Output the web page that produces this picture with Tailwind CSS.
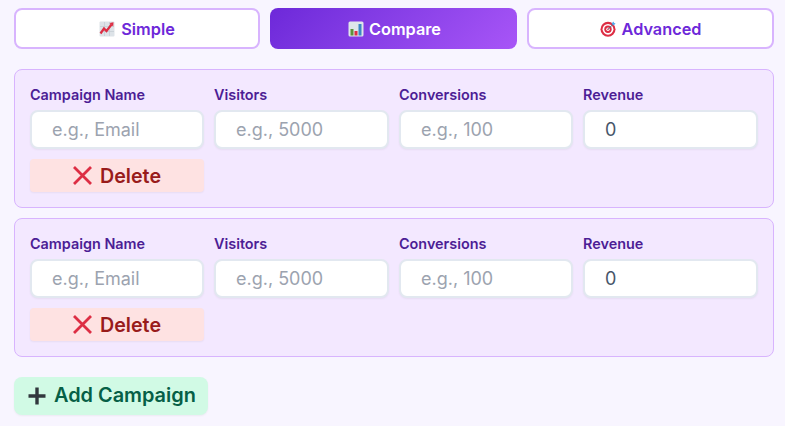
<!DOCTYPE html>
<html>
  <head>
    <meta charset="UTF-8" />
    <title>Campaign compare</title>
    <script src="https://cdn.jsdelivr.net/npm/@tailwindcss/browser@4"></script>
  </head>
  <body class="bg-[#f8f5ff] font-['Inter',sans-serif] overflow-hidden">
    <div class="pl-[14px] pr-[11px] pt-2 pb-[11px]">
      <!-- Tabs -->
      <div class="grid grid-cols-[246px_247px_247px] gap-[10px] mb-5">
        <button class="h-[41px] pt-px flex items-center justify-center gap-[6px] bg-white border-2 border-[#d8b4fe] rounded-lg text-[16.3px] font-semibold text-[#6d28d9]">
          <svg class="w-4 h-4" viewBox="0 0 16 16"><rect x="0.5" y="0.5" width="15" height="15" rx="1" fill="#dde3e8"/><path d="M5.5 1v14M10.5 1v14M1 5.5h14M1 10.5h14" stroke="#c3ccd3" stroke-width="0.7"/><path d="M1.5 12.5l3.5-5 2.5 2.5 5-6.5" fill="none" stroke="#dd2e44" stroke-width="2.2"/><path d="M10.5 2l4-.8-.3 4.3z" fill="#dd2e44"/></svg>
          <span>Simple</span>
        </button>
        <button class="h-[41px] pt-px pl-[2px] flex items-center justify-center gap-[5px] bg-linear-135 from-[#6d28d9] to-[#a855f7] rounded-lg text-[16.3px] font-semibold text-white">
          <svg class="w-4 h-4" viewBox="0 0 16 16"><rect x="0.5" y="0.5" width="15" height="15" rx="1.5" fill="#dfe6ea"/><rect x="2.5" y="8" width="3" height="6.5" fill="#5c913b"/><rect x="6.5" y="10" width="3" height="4.5" fill="#dd2e44"/><rect x="10.5" y="3" width="3" height="11.5" fill="#3b88c3"/></svg>
          <span>Compare</span>
        </button>
        <button class="h-[41px] pt-px flex items-center justify-center gap-[6px] bg-white border-2 border-[#d8b4fe] rounded-lg text-[16.3px] font-semibold text-[#6d28d9]">
          <svg class="w-4 h-4" viewBox="0 0 16 16"><circle cx="8" cy="8.3" r="7.5" fill="#dd2e44"/><circle cx="8" cy="8.3" r="5.4" fill="#fff"/><circle cx="8" cy="8.3" r="3.7" fill="#dd2e44"/><circle cx="8" cy="8.3" r="1.7" fill="#fff"/><circle cx="8" cy="8.3" r="0.8" fill="#dd2e44"/><path d="M8 8.3l6-6" stroke="#55708a" stroke-width="1"/><path d="M11.5 2.5l2-2 .6 1.4 1.5.5-2 2z" fill="#55acee"/></svg>
          <span>Advanced</span>
        </button>
      </div>

      <!-- Campaign rows -->
      <div class="flex flex-col gap-[10px]">
        <div class="h-[139px] bg-[#f3e8ff] border border-[#d8b4fe] rounded-lg px-[15px] pt-[14px]">
          <div class="grid grid-cols-[174px_175px_174px_175px] gap-x-[10px]">
            <div>
              <label class="block h-[26px] text-[14.4px] font-semibold leading-[22px] text-[#4c1d95]">Campaign Name</label>
              <input type="text" placeholder="e.g., Email" class="block w-full h-[39px] px-5 bg-white border-2 border-[#e2e8f0] rounded-lg shadow-xs text-lg text-[#475569] placeholder:text-[#9ca3af]" />
            </div>
            <div>
              <label class="block h-[26px] text-[14.4px] font-semibold leading-[22px] text-[#4c1d95]">Visitors</label>
              <input type="text" placeholder="e.g., 5000" class="block w-full h-[39px] px-5 bg-white border-2 border-[#e2e8f0] rounded-lg shadow-xs text-lg text-[#475569] placeholder:text-[#9ca3af]" />
            </div>
            <div>
              <label class="block h-[26px] text-[14.4px] font-semibold leading-[22px] text-[#4c1d95]">Conversions</label>
              <input type="text" placeholder="e.g., 100" class="block w-full h-[39px] px-5 bg-white border-2 border-[#e2e8f0] rounded-lg shadow-xs text-lg text-[#475569] placeholder:text-[#9ca3af]" />
            </div>
            <div>
              <label class="block h-[26px] text-[14.4px] font-semibold leading-[22px] text-[#4c1d95]">Revenue</label>
              <input type="text" value="0" class="block w-full h-[39px] px-5 bg-white border-2 border-[#e2e8f0] rounded-lg shadow-xs text-lg text-[#475569]" />
            </div>
            <button class="mt-[10px] h-[33px] flex items-center justify-center gap-[8px] bg-[#fee2e2] rounded shadow-xs text-[19.7px] font-semibold text-[#991b1b]">
              <svg class="w-[19px] h-[19px]" viewBox="0 0 19 19"><path d="M1 1l17 17M18 1L1 18" stroke="#dd2e44" stroke-width="2.8"/></svg>
              <span class="pt-[2px]">Delete</span>
            </button>
          </div>
        </div>

        <div class="h-[139px] bg-[#f3e8ff] border border-[#d8b4fe] rounded-lg px-[15px] pt-[14px]">
          <div class="grid grid-cols-[174px_175px_174px_175px] gap-x-[10px]">
            <div>
              <label class="block h-[26px] text-[14.4px] font-semibold leading-[22px] text-[#4c1d95]">Campaign Name</label>
              <input type="text" placeholder="e.g., Email" class="block w-full h-[39px] px-5 bg-white border-2 border-[#e2e8f0] rounded-lg shadow-xs text-lg text-[#475569] placeholder:text-[#9ca3af]" />
            </div>
            <div>
              <label class="block h-[26px] text-[14.4px] font-semibold leading-[22px] text-[#4c1d95]">Visitors</label>
              <input type="text" placeholder="e.g., 5000" class="block w-full h-[39px] px-5 bg-white border-2 border-[#e2e8f0] rounded-lg shadow-xs text-lg text-[#475569] placeholder:text-[#9ca3af]" />
            </div>
            <div>
              <label class="block h-[26px] text-[14.4px] font-semibold leading-[22px] text-[#4c1d95]">Conversions</label>
              <input type="text" placeholder="e.g., 100" class="block w-full h-[39px] px-5 bg-white border-2 border-[#e2e8f0] rounded-lg shadow-xs text-lg text-[#475569] placeholder:text-[#9ca3af]" />
            </div>
            <div>
              <label class="block h-[26px] text-[14.4px] font-semibold leading-[22px] text-[#4c1d95]">Revenue</label>
              <input type="text" value="0" class="block w-full h-[39px] px-5 bg-white border-2 border-[#e2e8f0] rounded-lg shadow-xs text-lg text-[#475569]" />
            </div>
            <button class="mt-[10px] h-[33px] flex items-center justify-center gap-[8px] bg-[#fee2e2] rounded shadow-xs text-[19.7px] font-semibold text-[#991b1b]">
              <svg class="w-[19px] h-[19px]" viewBox="0 0 19 19"><path d="M1 1l17 17M18 1L1 18" stroke="#dd2e44" stroke-width="2.8"/></svg>
              <span class="pt-[2px]">Delete</span>
            </button>
          </div>
        </div>
      </div>

      <!-- Add -->
      <button class="mt-5 w-[194px] h-[38px] flex items-center justify-start pl-[14px] gap-[8px] bg-[#d1fae5] rounded-lg shadow-xs text-[19.9px] font-semibold text-[#065f46]">
        <svg class="w-[18px] h-[18px]" viewBox="0 0 18 18"><path d="M9 0.5v17M0.5 9h17" stroke="#31373d" stroke-width="3.4"/></svg>
        <span>Add Campaign</span>
      </button>
    </div>
  </body>
</html>
